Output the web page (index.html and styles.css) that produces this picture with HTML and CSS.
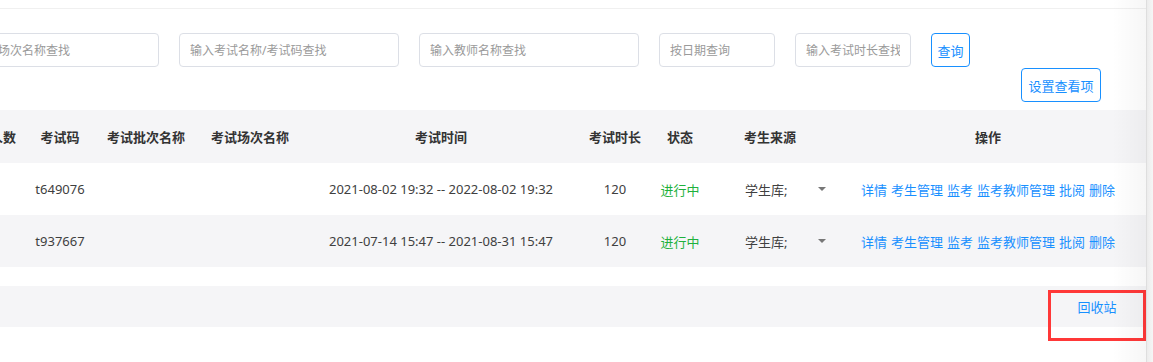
FILE: index.html
```html
<!DOCTYPE html>
<html lang="zh-CN">
<head>
    <meta charset="UTF-8">
    <title>考试管理</title>
    <link rel="stylesheet" href="styles.css">
</head>
<body>
    <div class="main">
        <div class="topbar"></div>

        <div class="filters">
            <input class="field wide" type="text" placeholder="输入考试场次名称查找">
            <input class="field wide" type="text" placeholder="输入考试名称/考试码查找">
            <input class="field wide" type="text" placeholder="输入教师名称查找">
            <input class="field short" type="text" placeholder="按日期查询">
            <input class="field short" type="text" placeholder="输入考试时长查找">
            <button class="btn btn-query">查询</button>
        </div>

        <div class="settings">
            <button class="btn btn-settings">设置查看项</button>
        </div>

        <div class="table-wrap">
            <table class="exam-table">
                <colgroup>
                    <col style="width:46px">
                    <col style="width:68px">
                    <col style="width:104px">
                    <col style="width:104px">
                    <col style="width:278px">
                    <col style="width:70px">
                    <col style="width:60px">
                    <col style="width:120px">
                    <col style="width:316px">
                </colgroup>
                <thead>
                    <tr>
                        <th class="cut">人数</th>
                        <th>考试码</th>
                        <th>考试批次名称</th>
                        <th>考试场次名称</th>
                        <th>考试时间</th>
                        <th>考试时长</th>
                        <th>状态</th>
                        <th>考生来源</th>
                        <th>操作</th>
                    </tr>
                </thead>
                <tbody>
                    <tr>
                        <td></td>
                        <td>t649076</td>
                        <td></td>
                        <td></td>
                        <td>2021-08-02 19:32 -- 2022-08-02 19:32</td>
                        <td>120</td>
                        <td class="status">进行中</td>
                        <td class="source-cell">
                            <div class="source"><span>学生库;</span><i class="arrow"></i></div>
                        </td>
                        <td class="actions">
                            <a href="#">详情</a><a href="#">考生管理</a><a href="#">监考</a><a href="#">监考教师管理</a><a href="#">批阅</a><a href="#">删除</a>
                        </td>
                    </tr>
                    <tr class="stripe">
                        <td></td>
                        <td>t937667</td>
                        <td></td>
                        <td></td>
                        <td>2021-07-14 15:47 -- 2021-08-31 15:47</td>
                        <td>120</td>
                        <td class="status">进行中</td>
                        <td class="source-cell">
                            <div class="source"><span>学生库;</span><i class="arrow"></i></div>
                        </td>
                        <td class="actions">
                            <a href="#">详情</a><a href="#">考生管理</a><a href="#">监考</a><a href="#">监考教师管理</a><a href="#">批阅</a><a href="#">删除</a>
                        </td>
                    </tr>
                </tbody>
            </table>
        </div>

        <div class="footer-band">
            <a class="recycle" href="#">回收站</a>
        </div>
    </div>
    <div class="scrollbar"></div>
</body>
</html>
```

FILE: styles.css
```css
body {
    margin: 0;
    display: flex;
    height: 100vh;
    overflow: hidden;
    background-color: #fff;
    font-family: "Noto Sans", "Noto Sans CJK SC", sans-serif;
    color: #333;
}
.main {
    width: 1146px;
    flex: none;
    position: relative;
    overflow: hidden;
}
/* soft shade along the right edge */
.main::after {
    content: "";
    position: absolute;
    top: 0;
    right: 0;
    bottom: 0;
    width: 34px;
    background: linear-gradient(to right, rgba(0, 0, 0, 0), rgba(0, 0, 0, 0.035));
    pointer-events: none;
}
.scrollbar {
    flex: 1;
    border-left: 1px solid #dedede;
    background: linear-gradient(to right, #ececec, #f6f6f6);
}
.topbar {
    height: 8px;
    border-bottom: 1px solid #f0f0f0;
}
.filters {
    display: flex;
    gap: 20px;
    margin: 24px 0 0 -61px;
}
.field {
    height: 34px;
    box-sizing: border-box;
    border: 1px solid #dcdfe6;
    border-radius: 4px;
    padding: 0 10px;
    font-family: inherit;
    font-size: 12px;
    color: #333;
    outline: none;
}
.field::placeholder {
    color: #9a9a9a;
}
.wide {
    width: 220px;
}
.short {
    width: 116px;
}
.btn {
    height: 34px;
    box-sizing: border-box;
    background-color: #fff;
    border: 1px solid #1890ff;
    border-radius: 4px;
    color: #1890ff;
    font-family: inherit;
    font-size: 13px;
    cursor: pointer;
}
.btn-query {
    width: 39px;
    padding: 0;
}
.settings {
    display: flex;
    justify-content: flex-end;
    margin: 1px 45px 0 0;
}
.btn-settings {
    width: 80px;
    padding: 0;
}
.table-wrap {
    margin: 8px 0 0 -20px;
}
.exam-table {
    width: 1166px;
    table-layout: fixed;
    border-collapse: collapse;
    font-size: 13px;
}
.exam-table th {
    height: 53px;
    background-color: #f5f5f7;
    font-weight: bold;
    color: #333;
    text-align: center;
    white-space: nowrap;
    padding: 0;
}
.exam-table th.cut {
    text-align: right;
    padding-right: 10px;
}
.exam-table td {
    height: 52px;
    text-align: center;
    color: #404040;
    white-space: nowrap;
    padding: 0;
}
.exam-table tr.stripe td {
    background-color: #f5f5f7;
}
.status {
    color: #1eb13c !important;
}
.source-cell {
    padding: 0 4px 0 35px !important;
}
.source {
    display: flex;
    align-items: center;
}
.arrow {
    margin-left: auto;
    width: 0;
    height: 0;
    border-left: 4px solid transparent;
    border-right: 4px solid transparent;
    border-top: 4px solid #777;
}
.actions a {
    color: #1890ff;
    text-decoration: none;
    margin: 0 2px;
}
.footer-band {
    height: 41px;
    margin-top: 19px;
    background-color: #f5f5f7;
    display: flex;
    justify-content: flex-end;
    align-items: flex-start;
}
.recycle {
    width: 98px;
    height: 51px;
    margin-top: 4px;
    box-sizing: border-box;
    border: 3px solid #ff3838;
    padding-top: 4px;
    text-align: center;
    line-height: 20px;
    font-size: 13px;
    color: #1890ff;
    text-decoration: none;
}
```
